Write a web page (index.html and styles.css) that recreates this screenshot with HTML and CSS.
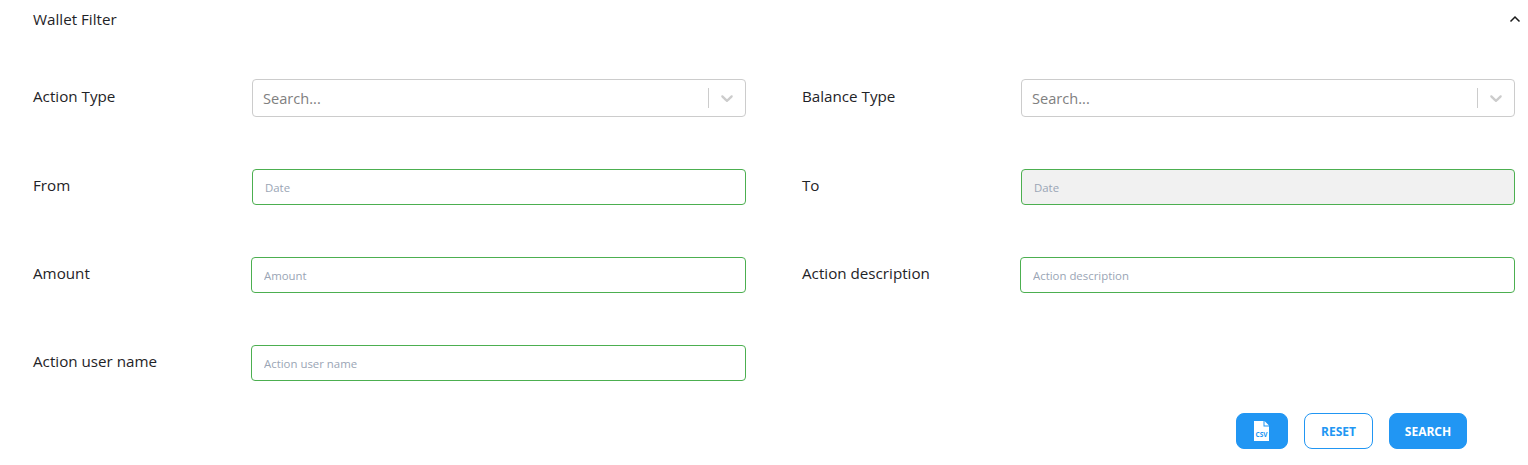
FILE: index.html
```html
<!DOCTYPE html>
<html lang="en">
<head>
    <meta charset="UTF-8">
    <meta name="viewport" content="width=device-width, initial-scale=1.0">
    <title>Wallet Filter</title>
    <link rel="stylesheet" href="styles.css">
</head>
<body>
    <div class="filter-panel">
        <div class="filter-header">
            <span class="filter-title">Wallet Filter</span>
            <svg class="collapse-icon" width="12" height="8" viewBox="0 0 12 8" fill="none">
                <path d="M1.500 6.500L6 2l4.500 4.500" stroke="#1a1a1a" stroke-width="1.500"/>
            </svg>
        </div>

        <div class="filter-grid">
            <div class="filter-row">
                <label class="filter-label">Action Type</label>
                <div class="select-box">
                    <span class="select-placeholder">Search...</span>
                    <span class="select-separator"></span>
                    <svg class="select-arrow" width="20" height="20" viewBox="0 0 20 20">
                        <path d="M4.516 7.548c0.436-0.446 1.043-0.481 1.576 0l3.908 3.747 3.908-3.747c0.533-0.481 1.141-0.446 1.574 0 0.436 0.445 0.408 1.197 0 1.615-0.406 0.418-4.695 4.502-4.695 4.502-0.217 0.223-0.502 0.335-0.787 0.335s-0.57-0.112-0.789-0.335c0 0-4.287-4.084-4.695-4.502s-0.436-1.17 0-1.615z"/>
                    </svg>
                </div>
            </div>
            <div class="filter-row">
                <label class="filter-label">Balance Type</label>
                <div class="select-box">
                    <span class="select-placeholder">Search...</span>
                    <span class="select-separator"></span>
                    <svg class="select-arrow" width="20" height="20" viewBox="0 0 20 20">
                        <path d="M4.516 7.548c0.436-0.446 1.043-0.481 1.576 0l3.908 3.747 3.908-3.747c0.533-0.481 1.141-0.446 1.574 0 0.436 0.445 0.408 1.197 0 1.615-0.406 0.418-4.695 4.502-4.695 4.502-0.217 0.223-0.502 0.335-0.787 0.335s-0.57-0.112-0.789-0.335c0 0-4.287-4.084-4.695-4.502s-0.436-1.17 0-1.615z"/>
                    </svg>
                </div>
            </div>

            <div class="filter-row">
                <label class="filter-label">From</label>
                <input class="filter-input" type="text" placeholder="Date">
            </div>
            <div class="filter-row">
                <label class="filter-label">To</label>
                <input class="filter-input" type="text" placeholder="Date" disabled>
            </div>

            <div class="filter-row">
                <label class="filter-label filter-label-short">Amount</label>
                <input class="filter-input" type="text" placeholder="Amount">
            </div>
            <div class="filter-row">
                <label class="filter-label filter-label-short">Action description</label>
                <input class="filter-input" type="text" placeholder="Action description">
            </div>

            <div class="filter-row">
                <label class="filter-label filter-label-short">Action user name</label>
                <input class="filter-input" type="text" placeholder="Action user name">
            </div>
        </div>

        <div class="filter-actions">
            <button class="btn btn-solid btn-csv" aria-label="Export CSV">
                <svg width="16" height="20" viewBox="0 0 16 20">
                    <path d="M0 0h9.500v5.500H15V20H0z" fill="#fff"/>
                    <path d="M10.500 0L15 4.500h-4.500z" fill="#fff"/>
                    <text class="csv-text" x="7.500" y="15.500" text-anchor="middle">CSV</text>
                </svg>
            </button>
            <button class="btn btn-outline btn-reset">RESET</button>
            <button class="btn btn-solid btn-search">SEARCH</button>
        </div>
    </div>
</body>
</html>
```

FILE: styles.css
```css
body {
    margin: 0;
    background-color: #fff;
    color: #1f2327;
    font-family: "Open Sans", "Noto Sans", Arial, sans-serif;
}
.filter-panel {
    padding: 0 13px 0 33px;
}
.filter-header {
    display: flex;
    justify-content: space-between;
    align-items: center;
    height: 38px;
    margin-right: -6px;
}
.filter-title {
    font-size: 15.2px;
}
.collapse-icon {
    display: block;
}
.filter-grid {
    display: grid;
    grid-template-columns: 713px 713px;
    column-gap: 56px;
    row-gap: 52px;
    padding-top: 41px;
}
.filter-row {
    display: flex;
    align-items: center;
}
.filter-label {
    flex: 0 0 219px;
    font-size: 15.2px;
    padding-bottom: 4px;
}
.filter-label-short {
    flex-basis: 218px;
}
.select-box {
    flex: 1;
    display: flex;
    align-items: center;
    box-sizing: border-box;
    height: 38px;
    padding: 0 8px 0 10px;
    border: 1px solid #ccc;
    border-radius: 4px;
}
.select-placeholder {
    flex: 1;
    font-size: 14.6px;
    color: #808080;
}
.select-separator {
    width: 1px;
    height: 20px;
    background-color: #ccc;
    margin-right: 8px;
}
.select-arrow {
    fill: #ccc;
}
.filter-input {
    flex: 1;
    min-width: 0;
    box-sizing: border-box;
    height: 36px;
    padding: 0 12px;
    border: 1px solid #4caf50;
    border-radius: 4px;
    background-color: #fff;
    font-family: inherit;
    font-size: 11.4px;
    outline: none;
}
.filter-input::placeholder {
    color: #9aa5b5;
    opacity: 1;
}
.filter-input:disabled {
    background-color: #f1f1f1;
}
.filter-actions {
    display: flex;
    justify-content: flex-end;
    gap: 16px;
    padding: 32px 48px 0 0;
}
.btn {
    box-sizing: border-box;
    height: 36px;
    padding: 0;
    border: 1px solid #2196f3;
    border-radius: 8px;
    font-family: inherit;
    font-size: 12px;
    font-weight: 700;
    cursor: pointer;
}
.btn-solid {
    background-color: #2196f3;
    color: #fff;
}
.btn-outline {
    background-color: #fff;
    color: #2196f3;
}
.btn-reset {
    width: 69px;
}
.btn-search {
    width: 78px;
}
.btn-csv {
    display: flex;
    align-items: center;
    justify-content: center;
    width: 52px;
}
.csv-text {
    font-size: 6.5px;
    font-weight: 700;
    fill: #2196f3;
}
```
